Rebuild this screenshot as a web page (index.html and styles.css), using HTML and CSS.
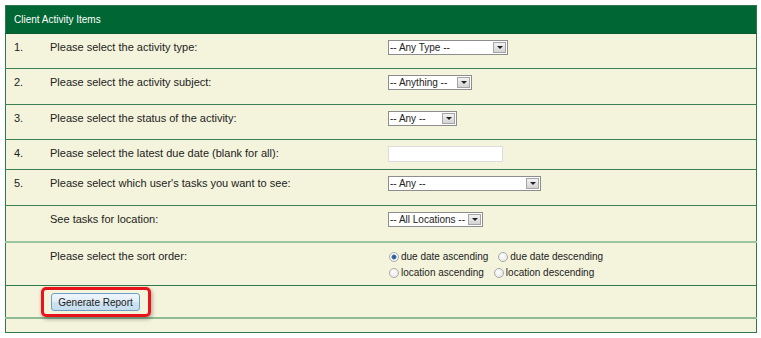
FILE: index.html
```html
<!DOCTYPE html>
<html lang="en">
<head>
    <meta charset="UTF-8">
    <title>Client Activity Items</title>
    <link rel="stylesheet" href="styles.css">
</head>
<body>
    <table class="report">
        <tr class="head">
            <th colspan="3">Client Activity Items</th>
        </tr>
        <tr class="r35">
            <td class="num">1.</td>
            <td class="label">Please select the activity type:</td>
            <td class="ctrl">
                <label class="dd" style="width: 120px"><select><option>-- Any Type --</option></select><span class="arrow"></span></label>
            </td>
        </tr>
        <tr class="r36">
            <td class="num">2.</td>
            <td class="label">Please select the activity subject:</td>
            <td class="ctrl">
                <label class="dd" style="width: 84px"><select><option>-- Anything --</option></select><span class="arrow"></span></label>
            </td>
        </tr>
        <tr class="r35">
            <td class="num">3.</td>
            <td class="label">Please select the status of the activity:</td>
            <td class="ctrl">
                <label class="dd" style="width: 69px"><select><option>-- Any --</option></select><span class="arrow"></span></label>
            </td>
        </tr>
        <tr class="r30">
            <td class="num">4.</td>
            <td class="label">Please select the latest due date (blank for all):</td>
            <td class="ctrl"><input type="text" class="date"></td>
        </tr>
        <tr class="r36">
            <td class="num">5.</td>
            <td class="label">Please select which user's tasks you want to see:</td>
            <td class="ctrl">
                <label class="dd" style="width: 153px"><select><option>-- Any --</option></select><span class="arrow"></span></label>
            </td>
        </tr>
        <tr class="r36">
            <td class="num"></td>
            <td class="label">See tasks for location:</td>
            <td class="ctrl">
                <label class="dd" style="width: 95px"><select><option>-- All Locations --</option></select><span class="arrow"></span></label>
            </td>
        </tr>
        <tr class="sort">
            <td class="num"></td>
            <td class="label">Please select the sort order:</td>
            <td class="ctrl">
                <div class="radios">
                    <label><input type="radio" name="sort" checked> due date ascending</label>
                    <label><input type="radio" name="sort"> due date descending</label>
                </div>
                <div class="radios">
                    <label><input type="radio" name="sort"> location ascending</label>
                    <label><input type="radio" name="sort"> location descending</label>
                </div>
            </td>
        </tr>
        <tr class="actions">
            <td colspan="3" class="btn-cell">
                <span class="highlight"><button type="button">Generate Report</button></span>
            </td>
        </tr>
        <tr class="foot">
            <td colspan="3"></td>
        </tr>
    </table>
</body>
</html>
```

FILE: styles.css
```css
body {
    margin: 0;
    padding: 5px;
    background: #fff;
    font-family: "Liberation Sans", Arial, sans-serif;
    font-size: 11px;
    color: #222;
}
.report {
    width: 752px;
    border-collapse: collapse;
    background: #f4f4dc;
    border: 1px solid #2e7a4c;
}
.report td {
    padding: 6px 5px 0 5px;
    vertical-align: top;
    border-bottom: 1px solid #3a8054;
    line-height: 14px;
}
.head th {
    height: 27px;
    padding: 0 8px;
    background: #006633;
    color: #fff;
    font-size: 10px;
    font-weight: normal;
    text-align: left;
    vertical-align: middle;
    border-bottom: 1px solid #0b5a30;
}
.r35 td { height: 28px; }
.r36 td { height: 29px; }
.r30 td { height: 23px; }
.report td.num {
    width: 26px;
    padding-left: 8px;
}
.report td.label {
    width: 328px;
}
.dd {
    display: inline-flex;
    align-items: stretch;
    height: 15px;
    background: #fff;
    border: 1px solid #8d8d8d;
    box-sizing: border-box;
}
.dd select {
    flex: 1;
    min-width: 0;
    appearance: none;
    border: 0;
    padding: 0 0 0 1px;
    margin: 0;
    background: transparent;
    font: inherit;
    font-size: 10px;
    line-height: 13px;
    color: #222;
}
.arrow {
    width: 13px;
    margin: 1px;
    background: linear-gradient(#f2f2f2, #d4d4d4);
    border: 1px solid #a5a5a5;
    box-sizing: border-box;
    display: flex;
    align-items: center;
    justify-content: center;
}
.arrow::after {
    content: "";
    border-left: 3px solid transparent;
    border-right: 3px solid transparent;
    border-top: 3px solid #222;
}
.date {
    width: 115px;
    height: 16px;
    margin: 0;
    padding: 0;
    box-sizing: border-box;
    border: 1px solid #dcdcdc;
    background: #fff;
}
.sort td {
    height: 36px;
    border-bottom-color: #2e7a4c;
}
.sort {
    border-top: 2px solid #9cc49d;
}
.radios {
    display: flex;
    gap: 9px;
    height: 16px;
    align-items: center;
    font-size: 10px;
}
.radios label {
    display: inline-flex;
    align-items: center;
    gap: 2px;
}
.radios input {
    appearance: none;
    width: 10px;
    height: 10px;
    margin: 0 0 0 1px;
    border: 1px solid #a9a9a9;
    border-radius: 50%;
    background: radial-gradient(circle at 40% 35%, #fff, #e2e2e2);
}
.radios input:checked {
    background: radial-gradient(circle, #1d4d7c 0, #3a74ad 2px, #fff 3px, #e2e2e2 100%);
}
.actions td {
    height: 30px;
    padding-top: 1px;
    border-bottom: 2px solid #8fbd93;
}
.report td.btn-cell {
    padding-left: 35px;
}
.highlight {
    display: inline-block;
    padding: 3px 8px 3px 7px;
    border: 3px solid #e8141b;
    border-radius: 5px;
    box-shadow: 1px 2px 4px rgba(0, 0, 0, 0.35);
}
.highlight button {
    display: block;
    width: 89px;
    height: 18px;
    padding: 0;
    font-family: inherit;
    font-size: 10px;
    color: #1a1a1a;
    border: 1px solid #6f9fc4;
    border-radius: 3px;
    background: linear-gradient(#eef6fb 0, #e0edf6 50%, #cfe3f0 51%, #c4ddee 100%);
}
.foot td {
    height: 13px;
    padding: 0;
    border-bottom: 1px solid #2e7a4c;
}
```
